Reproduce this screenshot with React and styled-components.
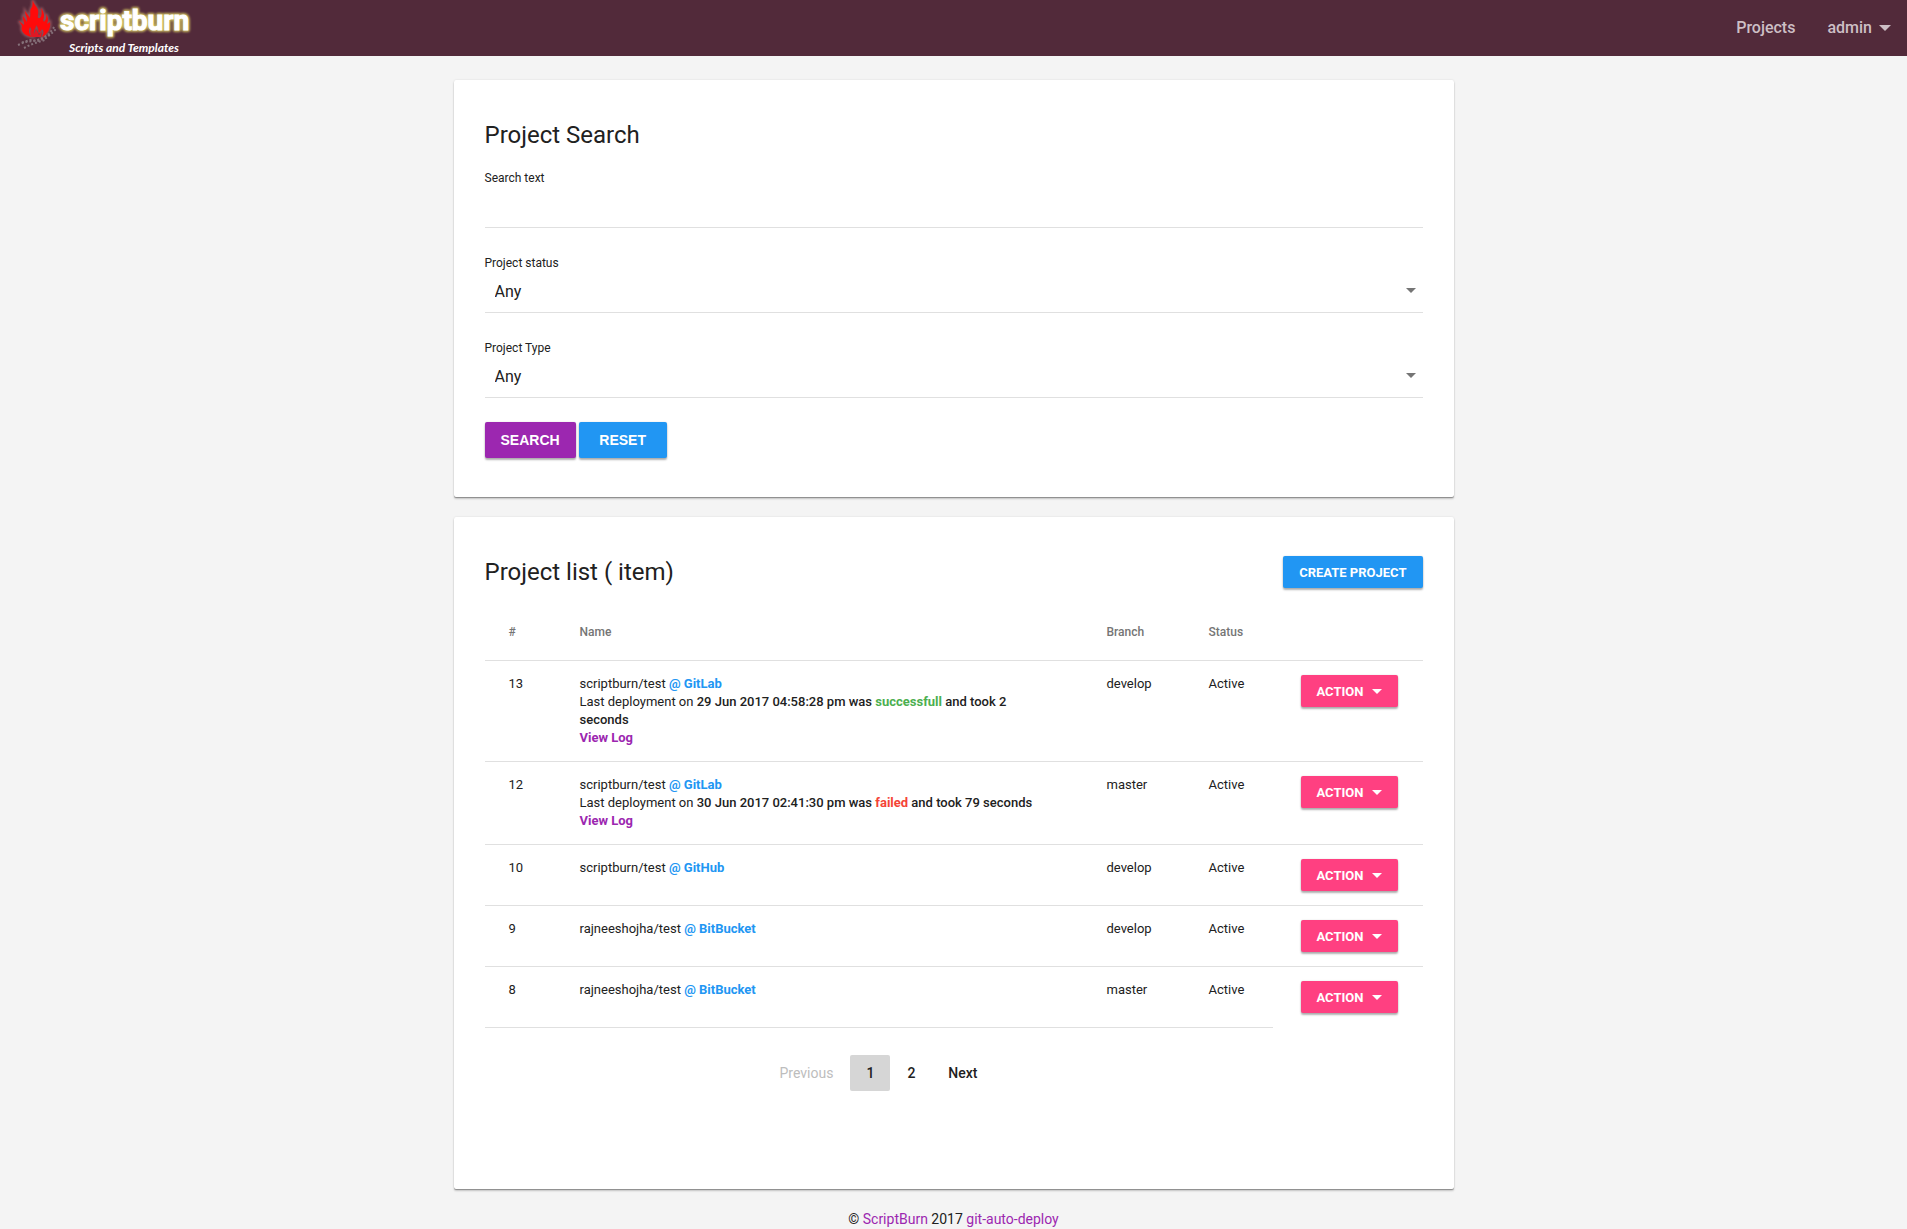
import React from 'react';
import styled, { createGlobalStyle, css } from 'styled-components';

const GlobalStyle = createGlobalStyle`
  *, *::before, *::after { box-sizing: border-box; }
  body {
    margin: 0;
    background: #f4f4f4;
    color: #212121;
    font-family: Roboto, "Liberation Sans", sans-serif;
    font-size: 14px;
    line-height: 20px;
  }
  a { color: #9c27b0; text-decoration: none; }
`;

const Header = styled.header`
  display: flex;
  align-items: center;
  justify-content: space-between;
  height: 56px;
  padding: 0 16px;
  background: #522a3a;
`;

const Brand = styled.a`
  display: flex;
  height: 56px;
`;

const Nav = styled.nav`
  display: flex;
  gap: 32px;
`;

const NavLink = styled.a`
  display: flex;
  align-items: center;
  gap: 7px;
  color: #cdbfc5;
  font-size: 16px;
  line-height: 24px;
  font-weight: 500;
`;

const Caret = styled.span`
  width: 0;
  height: 0;
  border: solid transparent;
  border-width: ${(p) => p.$size || 5}px ${(p) => p.$size || 5}px 0;
  border-top-color: currentColor;
`;

const Page = styled.main`
  display: flex;
  flex-direction: column;
  gap: 20px;
  max-width: 1000px;
  margin: 24px auto 20px;
`;

const Card = styled.section`
  padding: 39px 31px;
  background: #fff;
  border-radius: 2px;
  box-shadow: 0 0 2px rgba(0, 0, 0, 0.12), 0 2px 2px rgba(0, 0, 0, 0.2), 0 1px 0 rgba(0, 0, 0, 0.24);
`;

const CardHead = styled.div`
  display: flex;
  align-items: center;
  justify-content: space-between;
`;

const Title = styled.h2`
  margin: 0;
  font-size: 24px;
  line-height: 32px;
  font-weight: 400;
`;

const Form = styled.form`
  display: flex;
  flex-direction: column;
  gap: 24px;
  margin-top: 18px;
`;

const Fields = styled.div`
  display: flex;
  flex-direction: column;
  gap: 26px;
`;

const Field = styled.div`
  display: flex;
  flex-direction: column;
`;

const Label = styled.label`
  font-size: 12px;
  line-height: 18px;
`;

const control = css`
  display: block;
  width: 100%;
  height: 41px;
  border: 0;
  border-bottom: 1px solid #e0e0e0;
  background: transparent;
  color: inherit;
  font: inherit;
  font-size: 16px;
  outline: none;
`;

const TextInput = styled.input`
  ${control}
  padding: 0;
`;

const SelectWrap = styled.div`
  position: relative;
  ${Caret} {
    position: absolute;
    right: 7px;
    top: 16px;
    color: #757575;
    pointer-events: none;
  }
`;

const Select = styled.select`
  ${control}
  padding: 0 24px 0 10px;
  appearance: none;
`;

const Actions = styled.div`
  display: flex;
  gap: 3px;
`;

const tones = { primary: '#9c27b0', info: '#2196f3', accent: '#ff4081' };

const Button = styled.button`
  display: inline-flex;
  align-items: center;
  justify-content: center;
  gap: 9px;
  min-width: 88px;
  height: ${(p) => (p.$small ? 32 : 36)}px;
  padding: 0 16px;
  border: 0;
  border-radius: 2px;
  background: ${(p) => tones[p.$tone]};
  color: #fff;
  font-family: ${(p) => (p.$small ? 'Roboto' : '"Liberation Sans"')}, sans-serif;
  font-size: ${(p) => (p.$small ? 13 : 14)}px;
  font-weight: 700;
  text-transform: uppercase;
  white-space: nowrap;
  box-shadow: 0 0 2px rgba(0, 0, 0, 0.12), 0 2px 2px rgba(0, 0, 0, 0.3);
  cursor: pointer;
`;

const Table = styled.table`
  width: 100%;
  margin-top: 16px;
  table-layout: fixed;
  border-collapse: separate;
  border-spacing: 0;
  font-size: 13px;
  line-height: 18px;
`;

const Col = styled.col`
  width: ${(p) => p.$width}px;
`;

const Th = styled.th`
  height: 56px;
  padding: 0 14px;
  color: #757575;
  font-size: 12px;
  font-weight: 500;
  text-align: left;
  &:first-child { padding-left: 24px; }
`;

const Td = styled.td`
  padding: 14px;
  border-top: 1px solid #e0e0e0;
  vertical-align: top;
  &:first-child { padding-left: 24px; }
`;

const NameTd = styled(Td)`
  padding-right: 56px;
`;

const ActionTd = styled(Td)`
  padding-left: 28px;
  padding-right: 0;
  line-height: 0;
`;

const FootTd = styled.td`
  padding: 27px 0 59px;
  border-top: 1px solid #e0e0e0;
`;

const Strong = styled.strong`
  font-weight: 500;
`;

const Tone = styled.span`
  color: ${(p) => (p.$ok ? '#4caf50' : '#f44336')};
  font-weight: 700;
`;

const Host = styled.strong`
  color: #2196f3;
  font-weight: 700;
`;

const LogLink = styled.a`
  font-weight: 700;
`;

const Pager = styled.nav`
  display: flex;
  justify-content: center;
  gap: 1px;
`;

const PageButton = styled.button`
  min-width: ${(p) => (p.$current ? 40 : 0)}px;
  height: 36px;
  padding: 0 16px;
  border: 0;
  border-radius: 2px;
  background: ${(p) => (p.$current ? '#d6d6d6' : 'transparent')};
  color: #212121;
  font: inherit;
  font-size: 14px;
  font-weight: 500;
  cursor: pointer;
  &:disabled {
    color: #bdbdbd;
    font-weight: 400;
    cursor: default;
  }
`;

const Footer = styled.footer`
  text-align: center;
`;

const LogoSvg = styled.svg`
  display: block;
  .name {
    font: 700 28px Roboto, sans-serif;
    fill: #fff;
    stroke: #fff;
    stroke-width: 1px;
  }
  .halo {
    fill: #c9b95f;
    stroke: #c9b95f;
    stroke-width: 4px;
    stroke-linejoin: round;
  }
  .tag {
    font: italic 700 12px Lato, sans-serif;
    fill: #fff;
  }
`;

const flame =
  'M33 0C33 4 37 6 38 10C39 13 37 16 38 18L40 18C42 16 42 12 41 8C44 12 45 16 43 20L44 22C46 20 47 17 46 14C49 18 48 21 47 24L50 22C51 28 48 34 42 37C44 33 44 31 42 29C41 32 39 32 39 34C38 31 39 28 36 25C36 29 33 30 34 34C31 32 32 29 30 27C28 31 29 34 32 37C25 36 20 31 22 26L19 21L24 25C25 22 22 20 23 16L27 22C28 18 25 15 25 11L30 18C31 13 29 10 32 7C33 4 32 2 33 0Z';

function Logo() {
  return (
    <LogoSvg width="190" height="56" viewBox="16 0 190 56" role="img" aria-label="scriptburn, Scripts and Templates">
      <defs>
        <filter id="glow" x="-20%" y="-20%" width="140%" height="140%">
          <feGaussianBlur stdDeviation="1" />
        </filter>
      </defs>
      <g fill="none" stroke="#85717a" strokeWidth="2" strokeDasharray="2 2">
        <path d="M18 45L25 42L33 41L41 39L49 34L55 26" />
        <path d="M20 43L30 40L38 41L46 38L52 33L56 29" strokeDashoffset="2" />
        <path d="M24 48L30 45L38 42L45 40" />
      </g>
      <path d={flame} fill="none" stroke="#b06a70" strokeWidth="3" opacity="0.6" filter="url(#glow)" />
      <path d={flame} fill="#ff0a0a" />
      <path d="M32 37C30 34 30 31 31 29L34 34L36 29L39 35L42 31L41 37Z" fill="#e01824" />
      <text className="name halo" x="60" y="30" filter="url(#glow)" aria-hidden="true">scriptburn</text>
      <text className="name" x="60" y="30">scriptburn</text>
      <text className="tag" x="69" y="52">Scripts and Templates</text>
    </LogoSvg>
  );
}

const projects = [
  { id: 13, name: 'scriptburn/test', host: 'GitLab', branch: 'develop', status: 'Active',
    deploy: { at: '29 Jun 2017 04:58:28 pm', ok: true, took: 2 } },
  { id: 12, name: 'scriptburn/test', host: 'GitLab', branch: 'master', status: 'Active',
    deploy: { at: '30 Jun 2017 02:41:30 pm', ok: false, took: 79 } },
  { id: 10, name: 'scriptburn/test', host: 'GitHub', branch: 'develop', status: 'Active' },
  { id: 9, name: 'rajneeshojha/test', host: 'BitBucket', branch: 'develop', status: 'Active' },
  { id: 8, name: 'rajneeshojha/test', host: 'BitBucket', branch: 'master', status: 'Active' },
];

function SelectField({ id, label }) {
  return (
    <Field>
      <Label htmlFor={id}>{label}</Label>
      <SelectWrap>
        <Select id={id} defaultValue="any">
          <option value="any">Any</option>
        </Select>
        <Caret />
      </SelectWrap>
    </Field>
  );
}

function ProjectRow({ project }) {
  const { id, name, host, branch, status, deploy } = project;
  return (
    <tr>
      <Td>{id}</Td>
      <NameTd>
        {name} <Host>@ {host}</Host>
        {deploy && (
          <>
            <br />
            Last deployment on{' '}
            <Strong>
              {deploy.at} was <Tone $ok={deploy.ok}>{deploy.ok ? 'successfull' : 'failed'}</Tone> and took{' '}
              {deploy.took} seconds
            </Strong>
            <br />
            <LogLink href="#log">View Log</LogLink>
          </>
        )}
      </NameTd>
      <Td>{branch}</Td>
      <Td>{status}</Td>
      <ActionTd>
        <Button type="button" $small $tone="accent">
          Action <Caret />
        </Button>
      </ActionTd>
    </tr>
  );
}

export default function App() {
  return (
    <>
      <GlobalStyle />
      <Header>
        <Brand href="#home"><Logo /></Brand>
        <Nav>
          <NavLink href="#projects">Projects</NavLink>
          <NavLink href="#account">admin <Caret $size={6} /></NavLink>
        </Nav>
      </Header>
      <Page>
        <Card>
          <Title>Project Search</Title>
          <Form onSubmit={(e) => e.preventDefault()}>
            <Fields>
              <Field>
                <Label htmlFor="search-text">Search text</Label>
                <TextInput id="search-text" type="text" />
              </Field>
              <SelectField id="project-status" label="Project status" />
              <SelectField id="project-type" label="Project Type" />
            </Fields>
            <Actions>
              <Button type="submit" $tone="primary">Search</Button>
              <Button type="reset" $tone="info">Reset</Button>
            </Actions>
          </Form>
        </Card>
        <Card>
          <CardHead>
            <Title>Project list ( item)</Title>
            <Button type="button" $small $tone="info">Create project</Button>
          </CardHead>
          <Table>
            <colgroup>
              <Col $width={81} />
              <col />
              <Col $width={102} />
              <Col $width={78} />
              <Col $width={150} />
            </colgroup>
            <thead>
              <tr>
                <Th>#</Th>
                <Th>Name</Th>
                <Th>Branch</Th>
                <Th>Status</Th>
                <Th />
              </tr>
            </thead>
            <tbody>
              {projects.map((project) => (
                <ProjectRow key={project.id} project={project} />
              ))}
            </tbody>
            <tfoot>
              <tr>
                <FootTd colSpan={4}>
                  <Pager aria-label="Pages">
                    <PageButton type="button" disabled>Previous</PageButton>
                    <PageButton type="button" $current aria-current="page">1</PageButton>
                    <PageButton type="button">2</PageButton>
                    <PageButton type="button">Next</PageButton>
                  </Pager>
                </FootTd>
              </tr>
            </tfoot>
          </Table>
        </Card>
      </Page>
      <Footer>
        © <a href="#scriptburn">ScriptBurn</a> 2017 <a href="#repo">git-auto-deploy</a>
      </Footer>
    </>
  );
}
